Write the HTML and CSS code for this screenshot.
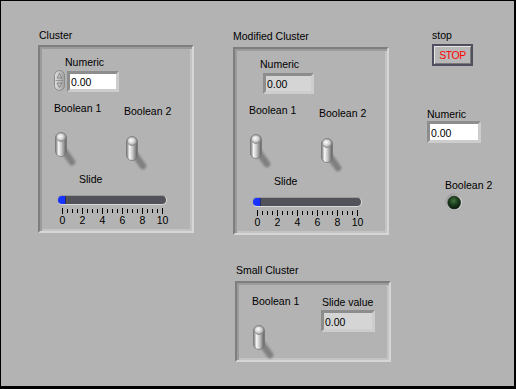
FILE: index.html
```html
<!DOCTYPE html>
<html>
<head>
<meta charset="utf-8">
<link rel="stylesheet" href="styles.css">
</head>
<body>
<div class="panel">
  <svg class="defs" width="0" height="0" aria-hidden="true">
    <defs>
      <linearGradient id="tgl" x1="0" y1="0" x2="1" y2="0">
        <stop offset="0" stop-color="#707070"/>
        <stop offset="0.28" stop-color="#f6f6f6"/>
        <stop offset="0.55" stop-color="#c6c6c6"/>
        <stop offset="1" stop-color="#5c5c5c"/>
      </linearGradient>
      <radialGradient id="knob" cx="0.4" cy="0.4" r="0.7">
        <stop offset="0" stop-color="#ffffff"/>
        <stop offset="0.6" stop-color="#c8c8c8"/>
        <stop offset="1" stop-color="#7c7c7c"/>
      </radialGradient>
      <linearGradient id="sp" x1="0" y1="0" x2="1" y2="0">
        <stop offset="0" stop-color="#e2e2e2"/>
        <stop offset="1" stop-color="#9e9e9e"/>
      </linearGradient>
      <linearGradient id="ledring" x1="0" y1="0" x2="1" y2="1">
        <stop offset="0" stop-color="#8e8e8e"/>
        <stop offset="1" stop-color="#f6f6f6"/>
      </linearGradient>
      <radialGradient id="ledg" cx="0.45" cy="0.35" r="0.65">
        <stop offset="0" stop-color="#437343"/>
        <stop offset="0.5" stop-color="#1d3f1d"/>
        <stop offset="1" stop-color="#0a190a"/>
      </radialGradient>
      <filter id="blur" x="-50%" y="-50%" width="200%" height="200%">
        <feGaussianBlur stdDeviation="1.2"/>
      </filter>
      <g id="toggle">
        <path d="M7 16 L17 30" stroke="#7a7a7a" stroke-width="6.5" stroke-linecap="round" filter="url(#blur)" opacity="0.9"/>
        <rect x="0.5" y="0.5" width="11" height="24" rx="5.5" fill="url(#tgl)" stroke="#777777" stroke-width="0.8"/>
        <ellipse cx="6" cy="5.2" rx="4.6" ry="4.2" fill="url(#knob)" stroke="#8a8a8a" stroke-width="0.8"/>
      </g>
      <g id="scale">
        <rect x="20" y="0" width="1" height="6"/><rect x="25" y="1" width="1" height="4"/><rect x="30" y="1" width="1" height="4"/><rect x="35" y="1" width="1" height="4"/>
        <rect x="40" y="0" width="1" height="6"/><rect x="45" y="1" width="1" height="4"/><rect x="50" y="1" width="1" height="4"/><rect x="55" y="1" width="1" height="4"/>
        <rect x="60" y="0" width="1" height="6"/><rect x="65" y="1" width="1" height="4"/><rect x="70" y="1" width="1" height="4"/><rect x="75" y="1" width="1" height="4"/>
        <rect x="80" y="0" width="1" height="6"/><rect x="85" y="1" width="1" height="4"/><rect x="90" y="1" width="1" height="4"/><rect x="95" y="1" width="1" height="4"/>
        <rect x="100" y="0" width="1" height="6"/><rect x="105" y="1" width="1" height="4"/><rect x="110" y="1" width="1" height="4"/><rect x="115" y="1" width="1" height="4"/>
        <rect x="120" y="0" width="1" height="6"/>
      </g>
    </defs>
  </svg>

  <!-- Cluster -->
  <div class="obj at-cluster">
    <span class="lbl cap">Cluster</span>
    <div class="frame big">
      <span class="lbl num-label">Numeric</span>
      <div class="num-row">
        <svg class="spinner" width="11" height="21" viewBox="0 0 11 21">
          <rect x="0.5" y="0.5" width="10" height="20" rx="5" fill="url(#sp)" stroke="#8a8a8a"/>
          <path d="M5.5 3.5 L8 8 H3 Z" fill="none" stroke="#7a7a7a" stroke-width="0.8"/>
          <line x1="1.5" y1="10.5" x2="9.5" y2="10.5" stroke="#8a8a8a" stroke-width="0.8"/>
          <path d="M5.5 17.5 L8 13 H3 Z" fill="none" stroke="#7a7a7a" stroke-width="0.8"/>
        </svg>
        <div class="numbox control w52">0.00</div>
      </div>
      <div class="bool-row">
        <div class="bcol1">
          <span class="lbl">Boolean 1</span>
          <svg class="toggle t1" width="24" height="34" viewBox="0 0 24 34"><use href="#toggle"/></svg>
        </div>
        <div class="bcol2">
          <span class="lbl">Boolean 2</span>
          <svg class="toggle t2" width="24" height="34" viewBox="0 0 24 34"><use href="#toggle"/></svg>
        </div>
      </div>
      <span class="lbl slide-label">Slide</span>
      <div class="track"></div>
      <svg class="scale" width="148" height="20" viewBox="0 0 148 20">
        <use href="#scale"/>
        <g class="scale-nums" text-anchor="middle">
          <text x="20.5" y="16">0</text><text x="40.5" y="16">2</text><text x="60.5" y="16">4</text>
          <text x="80.5" y="16">6</text><text x="100.5" y="16">8</text><text x="120.5" y="16">10</text>
        </g>
      </svg>
    </div>
  </div>

  <!-- Modified Cluster -->
  <div class="obj at-modified">
    <span class="lbl cap">Modified Cluster</span>
    <div class="frame big mod">
      <span class="lbl num-label">Numeric</span>
      <div class="num-row">
        <div class="numbox indicator w51 no-spin">0.00</div>
      </div>
      <div class="bool-row">
        <div class="bcol1">
          <span class="lbl">Boolean 1</span>
          <svg class="toggle t1" width="24" height="34" viewBox="0 0 24 34"><use href="#toggle"/></svg>
        </div>
        <div class="bcol2">
          <span class="lbl">Boolean 2</span>
          <svg class="toggle t2" width="24" height="34" viewBox="0 0 24 34"><use href="#toggle"/></svg>
        </div>
      </div>
      <span class="lbl slide-label">Slide</span>
      <div class="track"></div>
      <svg class="scale" width="148" height="20" viewBox="0 0 148 20">
        <use href="#scale"/>
        <g class="scale-nums" text-anchor="middle">
          <text x="20.5" y="16">0</text><text x="40.5" y="16">2</text><text x="60.5" y="16">4</text>
          <text x="80.5" y="16">6</text><text x="100.5" y="16">8</text><text x="120.5" y="16">10</text>
        </g>
      </svg>
    </div>
  </div>

  <!-- Small Cluster -->
  <div class="obj at-small">
    <span class="lbl cap">Small Cluster</span>
    <div class="frame small">
      <div class="scol1">
        <span class="lbl">Boolean 1</span>
        <svg class="toggle t1" width="24" height="34" viewBox="0 0 24 34"><use href="#toggle"/></svg>
      </div>
      <div class="scol2">
        <span class="lbl">Slide value</span>
        <div class="numbox indicator w54">0.00</div>
      </div>
    </div>
  </div>

  <!-- stop -->
  <div class="obj at-stop">
    <span class="lbl">stop</span>
    <div class="stop-btn">STOP</div>
  </div>

  <!-- Numeric -->
  <div class="obj at-numeric">
    <span class="lbl">Numeric</span>
    <div class="numbox control w54">0.00</div>
  </div>

  <!-- LED -->
  <div class="obj at-led">
    <span class="lbl">Boolean 2</span>
    <svg class="led" width="18" height="18" viewBox="0 0 18 18">
      <circle cx="9" cy="9" r="8.5" fill="url(#ledring)"/>
      <circle cx="9" cy="9" r="8.3" fill="none" stroke="#9c9c9c" stroke-width="0.5"/>
      <circle cx="9.2" cy="9.6" r="6.4" fill="url(#ledg)" stroke="#0d1d0d" stroke-width="0.6"/>
    </svg>
  </div>
</div>
</body>
</html>
```

FILE: styles.css
```css
html, body {
  margin: 0;
  padding: 0;
  background: #b3b3b3;
}

.panel {
  position: relative;
  width: 516px;
  height: 389px;
  background: #b3b3b3;
  box-shadow: inset 1px 1px 0 #000, inset -2px -3px 0 #000;
  font: 10.5px/13px "Liberation Sans", Arial, sans-serif;
  color: #000;
  overflow: hidden;
}

.defs {
  display: block;
  width: 0;
  height: 0;
  overflow: hidden;
}

.lbl {
  display: block;
  white-space: nowrap;
}

/* free-canvas placement of front panel objects */
.obj { position: absolute; }
.at-cluster { left: 38px; top: 29px; }
.at-modified { left: 233px; top: 30px; }
.at-small { left: 235px; top: 264px; }
.at-stop { left: 432px; top: 29px; }
.at-numeric { left: 427px; top: 108px; }
.at-led { left: 445px; top: 179px; }

.cap { margin-left: 1px; }
.at-modified .cap { margin-left: 0; }

/* cluster frame: recessed 4px border */
.frame {
  box-sizing: border-box;
  width: 156px;
  border: 2px solid;
  border-color: #7e7e7e #d6d6d6 #d6d6d6 #7e7e7e;
  box-shadow: inset 2px 2px 0 #9b9b9b, inset -2px -2px 0 #c4c4c4;
  padding: 2px;
  margin-top: 3px;
}
.at-modified .frame,
.at-small .frame { margin-top: 4px; }

.frame.big { height: 188px; }
.frame.small {
  height: 81px;
  display: flex;
  align-items: flex-start;
  padding-top: 12px;
}

.num-label { margin: 7px 0 0 23px; }

.num-row {
  display: flex;
  align-items: flex-start;
  height: 22px;
  margin: 1px 0 0 12px;
}

.spinner { display: block; }

.numbox {
  box-sizing: border-box;
  height: 21px;
  border: 3px solid;
  border-color: #8d8d8d #cdcdcd #cdcdcd #8d8d8d;
  padding: 1px 0 0 1px;
  line-height: 14px;
  white-space: nowrap;
}
.numbox.control { background: #fff; }
.numbox.indicator { background: #d5d5d5; }
.num-row .numbox { margin: 1px 0 0 2px; }
.num-row .numbox.no-spin { margin-left: 14px; }
.w51 { width: 51px; }
.w52 { width: 52px; }
.w54 { width: 54px; height: 22px; padding-top: 2px; }

.bool-row {
  display: flex;
  align-items: flex-start;
  height: 71px;
  margin-top: 10px;
}
.bcol1 { margin-left: 12px; width: 70px; }
.bcol2 { padding-top: 3px; }

.toggle { display: block; overflow: visible; }
.bcol1 .toggle { margin: 17px 0 0 1px; }
.bcol2 .toggle { margin: 18px 0 0 2px; }

.slide-label { margin-left: 37px; }

.track {
  box-sizing: border-box;
  width: 110px;
  height: 10px;
  margin: 9px 0 0 15px;
  border-radius: 5px;
  border: 1px solid;
  border-color: #9a9a9a #d8d8d8 #d8d8d8 #a8a8a8;
  background: linear-gradient(to right, #1733ff 0, #1733ff 7px, #2a2a6a 7px, #2a2a6a 8px, #52525a 8px);
}

.scale {
  display: block;
  margin-top: 3px;
  fill: #000;
}
.scale-nums text {
  font: 10.5px "Liberation Sans", Arial, sans-serif;
}

/* small cluster */
.scol1 { margin-left: 13px; width: 69px; }
.scol1 .toggle { margin: 17px 0 0 1px; }
.scol2 { padding-top: 1px; }
.scol2 .lbl { margin-left: 1px; }
.scol2 .numbox { margin-top: 1px; }

/* stop button */
.stop-btn {
  box-sizing: border-box;
  width: 41px;
  height: 22px;
  margin-top: 2px;
  border: 2px solid #4f4f60;
  background: #b8b8b8;
  box-shadow: inset 1px 1px 0 #e4e4e4, inset -1px -1px 0 #7a7a7a;
  color: #ff0000;
  text-align: center;
  line-height: 18px;
  letter-spacing: -0.5px;
}

.led {
  display: block;
  margin-top: 1px;
}
```
